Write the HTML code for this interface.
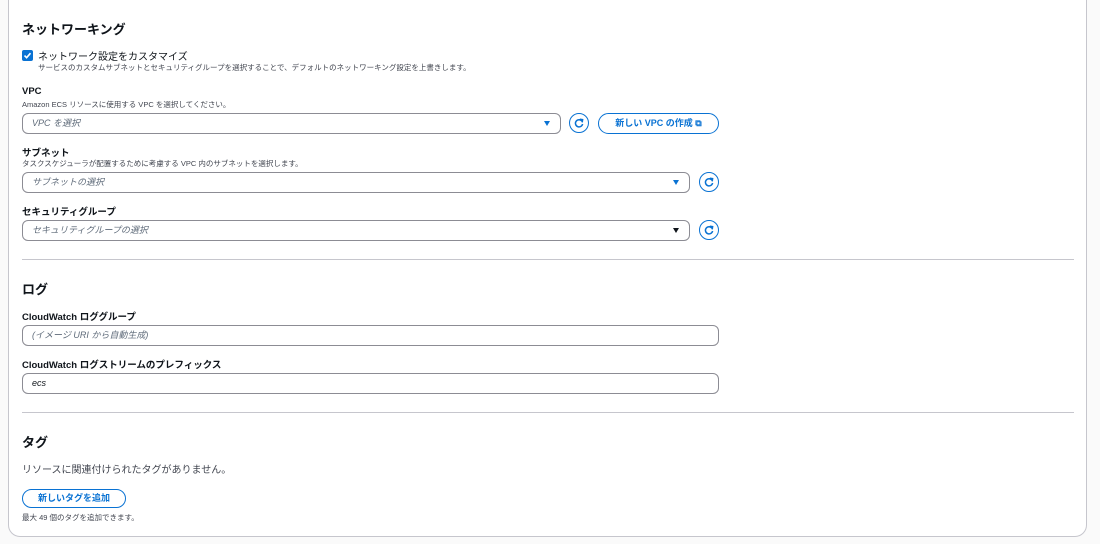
<!DOCTYPE html>
<html><head><meta charset="utf-8"><style>
body{margin:0;width:1100px;height:544px;background:#fafafa;font-family:"Liberation Sans","Noto Sans CJK JP",sans-serif;color:#0f141a;position:relative;overflow:hidden}
.card{position:absolute;left:8px;top:-20px;width:1079px;height:557px;background:#fff;border:1px solid #c6c6cd;border-radius:0 0 12px 12px;box-sizing:border-box}
.a{position:absolute;white-space:nowrap}
h2{position:absolute;margin:0;font-size:13px;font-weight:700;left:22px}
.lbl{font-size:9.5px;font-weight:700;left:22px}
.desc{font-size:7.5px;color:#424650;left:22px}
.sel{position:absolute;left:22px;height:21px;border:1px solid #8c8c94;border-radius:6px;box-sizing:border-box;font-size:9px;font-style:italic;color:#5f6b7a;padding-left:9px;line-height:19px;background:#fff}
.tri{position:absolute;right:10px;top:7px;width:0;height:0;border-left:3.5px solid transparent;border-right:3.5px solid transparent;border-top:5px solid #0972d3}
.ref{position:absolute;width:20px;height:20px;border:1.3px solid #0972d3;border-radius:50%;box-sizing:border-box}
.ref svg{position:absolute;left:4px;top:4px;display:block}
.hr{position:absolute;left:22px;width:1052px;height:1px;background:#c6c6cd}
.btn{position:absolute;border:1.3px solid #0972d3;border-radius:12px;box-sizing:border-box;color:#0972d3;font-size:9px;font-weight:700;text-align:center}
</style></head><body>
<div class="card"></div>
<h2 style="top:19px">ネットワーキング</h2>
<div class="a" style="left:22px;top:50px;width:11px;height:11px;background:#0972d3;border-radius:2px"><svg width="11" height="11" style="display:block"><path d="M2.5 5.6L4.6 7.7 8.5 3.2" stroke="#fff" stroke-width="1.6" fill="none"/></svg></div>
<div class="a" style="left:38px;top:48px;font-size:10px">ネットワーク設定をカスタマイズ</div>
<div class="a desc" style="left:38px;top:62px">サービスのカスタムサブネットとセキュリティグループを選択することで、デフォルトのネットワーキング設定を上書きします。</div>
<div class="a lbl" style="top:86px">VPC</div>
<div class="a desc" style="top:99px">Amazon ECS リソースに使用する VPC を選択してください。</div>
<div class="sel" style="top:113px;width:539px">VPC を選択<div class="tri"></div></div>
<div class="ref" style="left:569px;top:113px"><svg width="10" height="10"><path d="M8 3.2A3.6 3.6 0 1 0 8.6 6" stroke="#0972d3" stroke-width="1.5" fill="none"/><path d="M5.8 1.2L8.6 1.6 8.2 4.4" stroke="#0972d3" stroke-width="1.5" fill="none"/></svg></div>
<div class="btn" style="left:598px;top:113px;width:121px;height:21px;line-height:18px">新しい VPC の作成 <span style="font-size:9px">⧉</span></div>
<div class="a lbl" style="top:145px">サブネット</div>
<div class="a desc" style="top:158px">タスクスケジューラが配置するために考慮する VPC 内のサブネットを選択します。</div>
<div class="sel" style="top:172px;width:668px">サブネットの選択<div class="tri"></div></div>
<div class="ref" style="left:699px;top:172px"><svg width="10" height="10"><path d="M8 3.2A3.6 3.6 0 1 0 8.6 6" stroke="#0972d3" stroke-width="1.5" fill="none"/><path d="M5.8 1.2L8.6 1.6 8.2 4.4" stroke="#0972d3" stroke-width="1.5" fill="none"/></svg></div>
<div class="a lbl" style="top:204px">セキュリティグループ</div>
<div class="sel" style="top:220px;width:668px">セキュリティグループの選択<div class="tri" style="border-top-color:#0f141a"></div></div>
<div class="ref" style="left:699px;top:220px"><svg width="10" height="10"><path d="M8 3.2A3.6 3.6 0 1 0 8.6 6" stroke="#0972d3" stroke-width="1.5" fill="none"/><path d="M5.8 1.2L8.6 1.6 8.2 4.4" stroke="#0972d3" stroke-width="1.5" fill="none"/></svg></div>
<div class="hr" style="top:259px"></div>
<h2 style="top:279px">ログ</h2>
<div class="a lbl" style="top:309px">CloudWatch ロググループ</div>
<div class="sel" style="top:325px;width:697px">(イメージ URI から自動生成)</div>
<div class="a lbl" style="top:357px">CloudWatch ログストリームのプレフィックス</div>
<div class="sel" style="top:373px;width:697px;color:#0f141a">ecs</div>
<div class="hr" style="top:412px"></div>
<h2 style="top:432px">タグ</h2>
<div class="a" style="left:22px;top:461px;font-size:10px;color:#424650">リソースに関連付けられたタグがありません。</div>
<div class="btn" style="left:22px;top:489px;width:104px;height:19px;line-height:16px">新しいタグを追加</div>
<div class="a desc" style="top:512px">最大 49 個のタグを追加できます。</div>
</body></html>
